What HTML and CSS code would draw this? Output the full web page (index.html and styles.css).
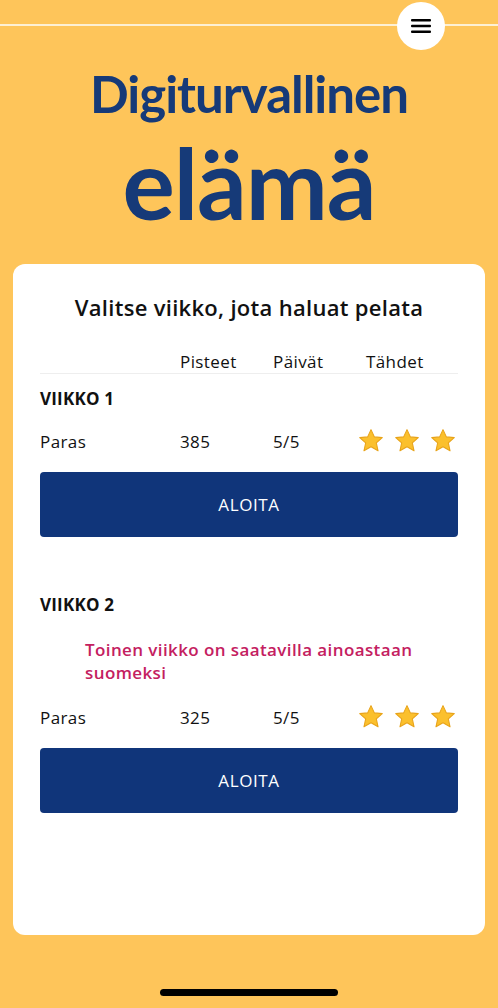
FILE: index.html
```html
<!DOCTYPE html>
<html lang="fi">
<head>
    <meta charset="UTF-8">
    <meta name="viewport" content="width=device-width, initial-scale=1.0">
    <title>Digiturvallinen elämä</title>
    <link rel="stylesheet" href="styles.css">
</head>
<body>
    <header class="top-bar">
        <button class="menu-button" aria-label="Valikko">
            <svg width="20" height="14" viewBox="0 0 20 14">
                <rect x="0" y="0" width="20" height="2.4" rx="1" fill="#000"/>
                <rect x="0" y="5.8" width="20" height="2.4" rx="1" fill="#000"/>
                <rect x="0" y="11.6" width="20" height="2.4" rx="1" fill="#000"/>
            </svg>
        </button>
    </header>

    <h1 class="page-title">
        <span class="title-small">Digiturvallinen</span>
        <span class="title-big">elämä</span>
    </h1>

    <main class="week-card">
        <h2 class="card-heading">Valitse viikko, jota haluat pelata</h2>

        <div class="score-row score-head">
            <span></span>
            <span>Pisteet</span>
            <span>Päivät</span>
            <span class="stars-label">Tähdet</span>
        </div>

        <!-- Viikko 1 -->
        <h3 class="week-title">VIIKKO 1</h3>
        <div class="score-row">
            <span>Paras</span>
            <span>385</span>
            <span>5/5</span>
            <span class="stars">
                <svg class="star" viewBox="0 0 24 24"><polygon points="12,1.5 15.1,8.2 22.4,8.9 16.9,13.8 18.5,21 12,17.3 5.5,21 7.1,13.8 1.6,8.9 8.9,8.2"/></svg>
                <svg class="star" viewBox="0 0 24 24"><polygon points="12,1.5 15.1,8.2 22.4,8.9 16.9,13.8 18.5,21 12,17.3 5.5,21 7.1,13.8 1.6,8.9 8.9,8.2"/></svg>
                <svg class="star" viewBox="0 0 24 24"><polygon points="12,1.5 15.1,8.2 22.4,8.9 16.9,13.8 18.5,21 12,17.3 5.5,21 7.1,13.8 1.6,8.9 8.9,8.2"/></svg>
            </span>
        </div>
        <button class="start-button">ALOITA</button>

        <!-- Viikko 2 -->
        <h3 class="week-title week-two">VIIKKO 2</h3>
        <p class="week-note">Toinen viikko on saatavilla ainoastaan suomeksi</p>
        <div class="score-row score-after-note">
            <span>Paras</span>
            <span>325</span>
            <span>5/5</span>
            <span class="stars">
                <svg class="star" viewBox="0 0 24 24"><polygon points="12,1.5 15.1,8.2 22.4,8.9 16.9,13.8 18.5,21 12,17.3 5.5,21 7.1,13.8 1.6,8.9 8.9,8.2"/></svg>
                <svg class="star" viewBox="0 0 24 24"><polygon points="12,1.5 15.1,8.2 22.4,8.9 16.9,13.8 18.5,21 12,17.3 5.5,21 7.1,13.8 1.6,8.9 8.9,8.2"/></svg>
                <svg class="star" viewBox="0 0 24 24"><polygon points="12,1.5 15.1,8.2 22.4,8.9 16.9,13.8 18.5,21 12,17.3 5.5,21 7.1,13.8 1.6,8.9 8.9,8.2"/></svg>
            </span>
        </div>
        <button class="start-button">ALOITA</button>
    </main>

    <div class="home-indicator"></div>
</body>
</html>
```

FILE: styles.css
```css
body {
    margin: 0;
    height: 1008px;
    background-color: #fec55a;
    font-family: "Open Sans", Lato, sans-serif;
    color: #111;
    display: flex;
    flex-direction: column;
}

.top-bar {
    height: 51px;
    display: flex;
    justify-content: flex-end;
    align-items: center;
    padding-right: 53px;
    /* thin light line running behind the menu button */
    background: linear-gradient(to bottom, transparent 24px, #fdf0d4 24px, #fdf0d4 26px, transparent 26px);
}

.menu-button {
    width: 48px;
    height: 48px;
    border: none;
    border-radius: 50%;
    background-color: #ffffff;
    display: flex;
    align-items: center;
    justify-content: center;
    padding: 0;
    cursor: pointer;
}

.page-title {
    margin: 0;
    text-align: center;
    color: #163a78;
    font-family: Lato, sans-serif;
    font-weight: 700;
}

.title-small {
    display: block;
    font-size: 51px;
    line-height: 60px;
    margin-top: 13px;
    letter-spacing: -1px;
}

.title-big {
    display: block;
    font-size: 98px;
    line-height: 100px;
    margin-top: 8px;
    letter-spacing: -1px;
}

.week-card {
    margin: 32px 13px 0;
    height: 671px;
    box-sizing: border-box;
    background-color: #ffffff;
    border-radius: 12px;
    padding: 30px 27px 0;
}

.card-heading {
    margin: 0;
    text-align: center;
    font-size: 22px;
    line-height: 26px;
    font-weight: 600;
    letter-spacing: 0.3px;
    color: #111;
}

.score-row {
    display: grid;
    grid-template-columns: 140px 93px 85px 1fr;
    align-items: center;
    font-size: 17px;
    letter-spacing: 0.4px;
    height: 26px;
    margin-top: 19px;
}

.score-head {
    height: 20px;
    margin-top: 30px;
    padding-bottom: 3px;
    border-bottom: 1px solid #eeeeee;
}

.stars-label {
    padding-left: 8px;
}

.stars {
    display: flex;
    gap: 10px;
}

.star {
    width: 26px;
    height: 26px;
    fill: #fbc02d;
    stroke: #e8a31a;
    stroke-width: 1;
    stroke-linejoin: round;
}

.week-title {
    margin: 15px 0 0;
    font-size: 17px;
    line-height: 20px;
    font-weight: 700;
    letter-spacing: 0.2px;
}

.week-two {
    margin-top: 58px;
}

.week-note {
    margin: 23px 0 0 45px;
    color: #c4205f;
    font-size: 17px;
    line-height: 23px;
    font-weight: 600;
    letter-spacing: 0.4px;
}

.score-after-note {
    margin-top: 20px;
}

.start-button {
    display: block;
    width: 100%;
    height: 65px;
    margin-top: 18px;
    border: none;
    border-radius: 4px;
    background-color: #10357a;
    color: #ffffff;
    font-family: "Open Sans", Lato, sans-serif;
    font-size: 17px;
    letter-spacing: 0.6px;
    cursor: pointer;
}

.home-indicator {
    width: 178px;
    height: 7px;
    margin: 54px auto 0;
    border-radius: 4px;
    background-color: #000;
}
```
